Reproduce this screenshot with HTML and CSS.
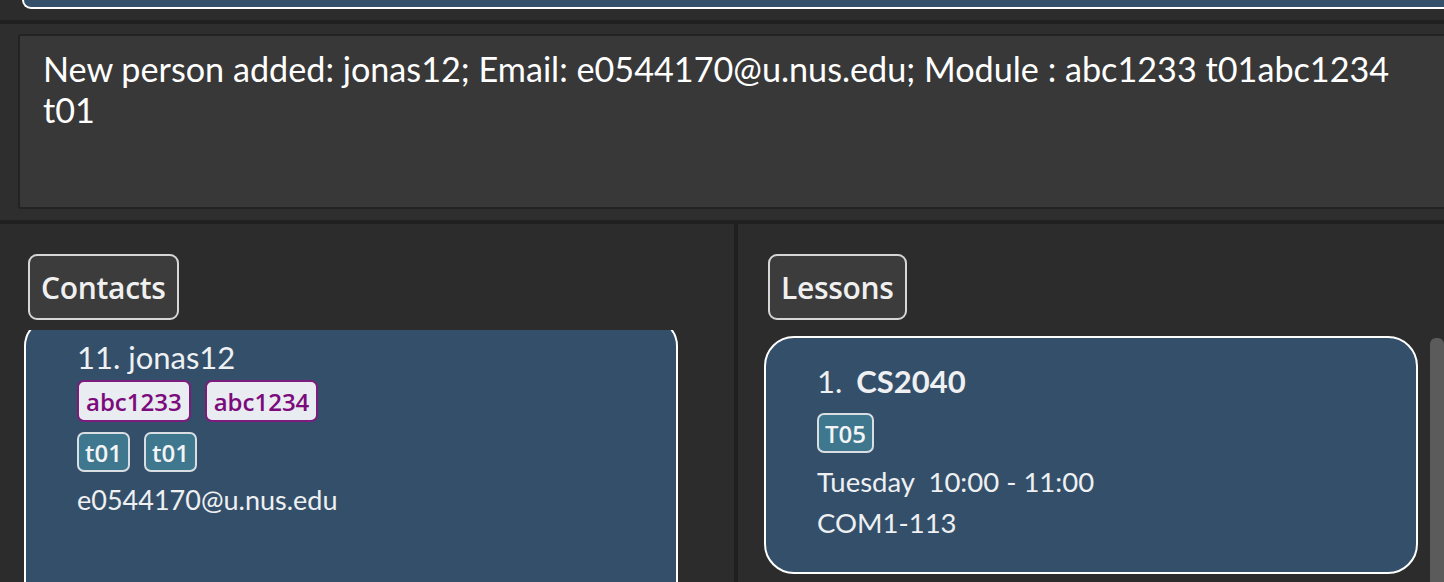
FILE: index.html
```html
<!DOCTYPE html>
<html>
<head>
<meta charset="utf-8">
<link rel="stylesheet" href="styles.css">
</head>
<body>
<div class="app">
  <div class="cmd-wrap"><div class="cmd"></div></div>
  <div class="sep"></div>
  <div class="result-wrap">
    <div class="result">New person added: jonas12; Email: e0544170@u.nus.edu; Module : abc1233 t01abc1234 t01</div>
  </div>
  <div class="sep"></div>
  <div class="panels">
    <section class="panel panel-contacts">
      <div class="label">Contacts</div>
      <div class="viewport">
        <div class="card card-person">
          <div class="name">11. jonas12</div>
          <div class="tags tags-first">
            <span class="tag tag-module">abc1233</span>
            <span class="tag tag-module">abc1234</span>
          </div>
          <div class="tags">
            <span class="tag tag-class">t01</span>
            <span class="tag tag-class">t01</span>
          </div>
          <div class="email">e0544170@u.nus.edu</div>
        </div>
      </div>
    </section>
    <div class="vdiv"></div>
    <section class="panel panel-lessons">
      <div class="label">Lessons</div>
      <div class="viewport viewport-lessons">
        <div class="card card-lesson">
          <div class="lesson-title"><span class="idx">1.</span><span class="code">CS2040</span></div>
          <div class="tags tags-lesson"><span class="tag tag-class">T05</span></div>
          <div class="line line-time">Tuesday&nbsp; 10:00 - 11:00</div>
          <div class="line">COM1-113</div>
        </div>
        <div class="scrollbar"></div>
      </div>
    </section>
  </div>
</div>
</body>
</html>
```
FILE: styles.css
```css
html, body {
  margin: 0;
  padding: 0;
  background: #2c2c2c;
  overflow: hidden;
}
.app {
  width: 1444px;
  height: 582px;
  overflow: hidden;
  display: flex;
  flex-direction: column;
  font-family: "Lato", "Open Sans", sans-serif;
  color: #eef0f2;
}
.cmd-wrap {
  height: 20px;
  padding-left: 22px;
  box-sizing: border-box;
}
.cmd {
  height: 9px;
  margin-right: -10px;
  background: #34506b;
  border: 2px solid #ffffff;
  border-top: none;
  border-radius: 0 0 18px 18px;
  box-sizing: border-box;
}
.sep {
  height: 4px;
  background: #202020;
  flex: none;
}
.result-wrap {
  height: 196px;
  padding: 10px 0 0 18px;
  box-sizing: border-box;
  background: #2e2e2e;
  flex: none;
}
.result {
  height: 175px;
  margin-right: -10px;
  box-sizing: border-box;
  background: #383838;
  border: 2px solid #232323;
  border-radius: 3px;
  padding: 12px 50px 0 23px;
  font-family: "Lato", sans-serif;
  font-size: 34.2px;
  line-height: 41px;
  color: #ffffff;
}
.panels {
  flex: 1;
  display: flex;
  min-height: 0;
}
.panel {
  display: flex;
  flex-direction: column;
  padding-top: 30px;
  box-sizing: border-box;
  min-height: 0;
}
.panel-contacts {
  width: 734px;
  padding-left: 24px;
}
.panel-lessons {
  flex: 1;
  padding-left: 26px;
}
.vdiv {
  width: 4px;
  background: #1f1f1f;
}
.label {
  align-self: flex-start;
  margin-left: 4px;
  height: 66px;
  box-sizing: border-box;
  padding: 0 11px;
  display: flex;
  align-items: center;
  background: #3c3c3c;
  border: 2px solid #d6d6d6;
  border-radius: 9px;
  font-family: "Open Sans", sans-serif;
  font-weight: 600;
  font-size: 30px;
  letter-spacing: -0.3px;
  color: #f0f0f0;
}
.viewport {
  margin-top: 10px;
  flex: 1;
  overflow: hidden;
  position: relative;
}
.card {
  background: #344f6a;
  border: 2px solid #ffffff;
  border-radius: 28px;
  box-sizing: border-box;
}
.card-person {
  width: 654px;
  height: 300px;
  margin-top: -12px;
  padding: 19px 0 0 51px;
}
.name {
  font-size: 31px;
  line-height: 36px;
}
.tags {
  display: flex;
  gap: 14px;
  margin-top: 10px;
}
.tags-first {
  margin-top: 5px;
}
.tag {
  display: inline-flex;
  align-items: center;
  height: 42px;
  box-sizing: border-box;
  padding: 0 7px;
  border-radius: 7px;
  font-family: "Open Sans", sans-serif;
  font-weight: 600;
  font-size: 24px;
}
.tag-module {
  background: #e9ecf0;
  border: 2px solid #7d1b7e;
  color: #7b0a7c;
}
.tag-class {
  background: #3e778e;
  border: 2px solid #d9dee3;
  color: #f2f4f6;
  height: 40px;
  padding: 0 6px;
}
.email {
  margin-top: 11px;
  font-size: 27px;
  line-height: 34px;
}
.viewport-lessons {
  padding-top: 6px;
  display: flex;
}
.card-lesson {
  width: 654px;
  height: 238px;
  padding: 23px 0 0 51px;
  border-radius: 30px;
}
.lesson-title {
  font-size: 31px;
  line-height: 40px;
  display: flex;
  gap: 14px;
}
.code {
  font-weight: 700;
}
.tags-lesson {
  margin-top: 12px;
}
.line {
  font-size: 27.5px;
  line-height: 35px;
  margin-top: 6px;
}
.line-time {
  margin-top: 11px;
}
.scrollbar {
  margin-left: 12px;
  width: 14px;
  margin-top: 2px;
  background: #5b5b5b;
  border-radius: 6px 6px 0 0;
}
```
